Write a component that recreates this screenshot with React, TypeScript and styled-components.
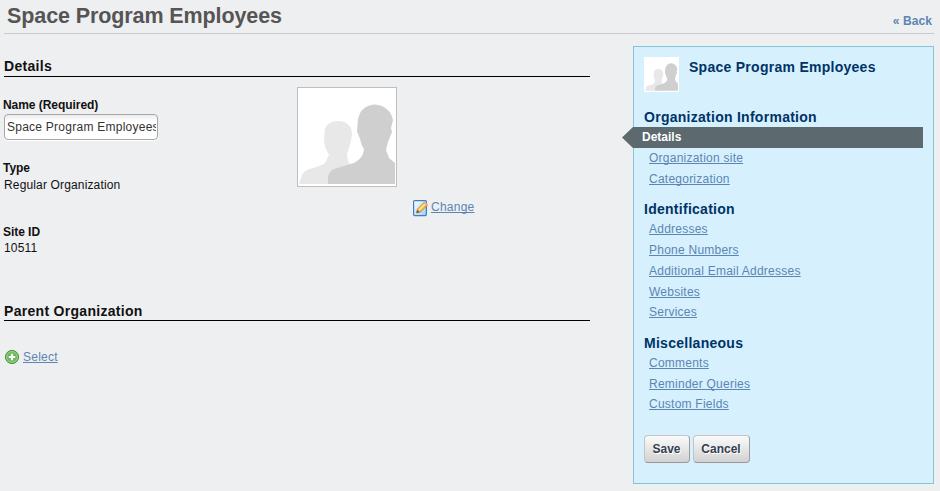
import React from "react";
import styled, { createGlobalStyle } from "styled-components";

const GlobalStyle = createGlobalStyle`
  * { box-sizing: border-box; }
  body {
    margin: 0;
    background: #eeeff1;
    color: #111;
    font: 12px/16px "Liberation Sans", Arial, sans-serif;
  }
`;

const Page = styled.div`
  width: 940px;
  height: 491px;
  padding: 0 6px 0 4px;
  overflow: hidden;
`;

const Header = styled.header`
  display: flex;
  justify-content: space-between;
  height: 34px;
  padding: 0 2px 0 3px;
  border-bottom: 1px solid #c8c9ca;
`;

const Title = styled.h1`
  margin: 0;
  padding-top: 4px;
  color: #555;
  font-size: 21.5px;
  line-height: 25px;
  letter-spacing: -0.1px;
`;

const Back = styled.a`
  margin-top: 13px;
  color: #5b86b2;
  font-weight: bold;
  letter-spacing: 0.1px;
  text-decoration: none;
`;

const Columns = styled.div`
  display: flex;
  justify-content: space-between;
  padding-top: 12px;
`;

const Main = styled.main`
  width: 586px;
  padding-top: 11px;
`;

const SectionTitle = styled.h2<{ $drop?: number }>`
  height: 20px;
  margin: 0;
  padding-top: ${(p) => p.$drop ?? 0}px;
  border-bottom: 1px solid #000;
  color: #111;
  font-size: 14px;
  line-height: 18px;
  letter-spacing: 0.3px;
`;

const DetailsBody = styled.div`
  display: grid;
  grid-template-columns: 293px 1fr;
  height: 224px;
  padding-top: 10px;
`;

const Fields = styled.div`
  padding-top: 10px;
`;

const Field = styled.div<{ $height: number }>`
  height: ${(p) => p.$height}px;
`;

const Label = styled.label`
  display: block;
  height: 17px;
  margin-left: -1px;
  font-weight: bold;
  letter-spacing: -0.05px;
`;

const Value = styled.div<{ $lift?: number }>`
  margin-top: -${(p) => p.$lift ?? 0}px;
  letter-spacing: 0.15px;
`;

const TextInput = styled.input`
  display: block;
  width: 154px;
  height: 26px;
  padding: 0 1px 0 2px;
  border: 1px solid #a5a7aa;
  border-radius: 4px;
  background: linear-gradient(#ececec, #fff 6px);
  box-shadow: 0 1px 0 #fff;
  color: #333;
  font: 12px "Liberation Sans", Arial, sans-serif;
  letter-spacing: 0.25px;
  outline: 0;
`;

const Portrait = styled.div`
  width: 100px;
  height: 100px;
  padding: 1px;
  border: 1px solid #bfbfbf;
  background: #fff;
`;

const Link = styled.a`
  color: #5b86b2;
  letter-spacing: 0.24px;
  line-height: 14px;
  text-decoration: underline 1px;
  text-decoration-skip-ink: none;
  text-underline-offset: 1px;
`;

const Action = styled.div<{ $indent: number; $top: number; $drop?: number }>`
  display: flex;
  gap: 3px;
  margin: ${(p) => p.$top}px 0 0 ${(p) => p.$indent}px;

  ${Link} {
    margin-top: ${(p) => p.$drop ?? 0}px;
  }
`;

const Sidebar = styled.aside`
  width: 301px;
  height: 438px;
  border: 1px solid #84c6d8;
  padding: 10px;
  background: #d7f0fe;
`;

const SideHeader = styled.div`
  display: flex;
  gap: 10px;
  height: 50px;
`;

const Thumb = styled.div`
  width: 35px;
  height: 35px;
  padding: 1px;
  background: #fff;
`;

const SideTitle = styled.h3`
  margin: 0;
  color: #036;
  font-size: 14px;
  line-height: 20px;
  letter-spacing: 0.27px;
`;

const Group = styled.section`
  margin-bottom: 9.85px;
`;

const Item = styled.div`
  display: flex;
  height: 20.75px;
  padding: 3.2px 0 0 5px;
`;

const Current = styled.div`
  display: flex;
  height: 20.75px;
`;

const CurrentBar = styled.div`
  width: 290px;
  height: 21px;
  flex: none;
  padding-left: 9px;
  background: #5c696e;
  color: #fff;
  font-weight: bold;
  line-height: 20px;
`;

const Arrow = styled.svg`
  flex: none;
  width: 11px;
  height: 21px;
  margin-left: -22px;
`;

const Buttons = styled.div`
  display: flex;
  gap: 3px;
  padding-top: 10px;
`;

const Button = styled.button<{ $width: number }>`
  width: ${(p) => p.$width}px;
  height: 28px;
  padding: 0 1px 0 0;
  border: 1px solid #c4c4c4;
  border-right-color: #9c9c9c;
  border-bottom-color: #999;
  border-radius: 4px;
  background: linear-gradient(#fafafa, #d2d2d2);
  color: #34404f;
  font: bold 12px "Liberation Sans", Arial, sans-serif;
  text-shadow: 1px 1px #fff;
`;

const People = styled.svg`
  display: block;
`;

const PeopleIcon = ({ size }: { size: number }) => (
  <People width={size} height={size} viewBox="0 0 96 96">
    <path
      fill="#e8e8e8"
      d="M0 95 3 86Q4 83 8 81L23 76Q27 74 28 70L30 66 26 58 25 51 26 39Q30 32 39 32Q48 32 52 39L53 45 52 52 50 59 48 65 49 72 53 78V95Z"
    />
    <path
      fill="#cfcfcf"
      d="M29 95V88Q30 82 35 80L55 74Q62 70 64 65L65 60Q62 56 61 50L58 42 59 30Q61 20 69 17Q75 14 83 17Q92 21 94 31L92 39 93 43 89 53 87 61 90 69 96 74V95Z"
    />
  </People>
);

const EditIcon = () => (
  <svg width="15" height="17" viewBox="0 0 15 17">
    <defs>
      <linearGradient id="paper" x1="0" y1="0" x2="1" y2="1">
        <stop offset="0" stopColor="#ffffff" />
        <stop offset="1" stopColor="#9bccf8" />
      </linearGradient>
    </defs>
    <rect x=".6" y=".6" width="12.8" height="15" rx="1" fill="url(#paper)" stroke="#427dc4" strokeWidth="1.2" />
    <path d="m3.5 13 1-4 7-7 3 3-7 7Z" fill="#f7bd45" stroke="#b9802e" strokeWidth=".8" />
    <path d="m6 10 6-6" stroke="#ffe9a1" strokeWidth="1.5" />
    <path d="m10.7 3 1.3-1.3 3 3L13.7 6Z" fill="#efac80" />
    <path d="m3.5 13 .8-3 2.2 2Z" fill="#5e5148" />
  </svg>
);

const AddIcon = () => (
  <svg width="16" height="16" viewBox="0 0 16 16">
    <circle cx="8" cy="8" r="6.6" fill="#6cbb5b" stroke="#4b963d" />
    <circle cx="8" cy="8" r="5.4" fill="none" stroke="#a6d89a" strokeWidth=".8" />
    <path d="M8 4.8v6.4M4.8 8h6.4" stroke="#fff" strokeWidth="2.1" />
  </svg>
);

const groups = [
  { title: "Organization Information", current: "Details", links: ["Organization site", "Categorization"] },
  {
    title: "Identification",
    links: ["Addresses", "Phone Numbers", "Additional Email Addresses", "Websites", "Services"],
  },
  { title: "Miscellaneous", links: ["Comments", "Reminder Queries", "Custom Fields"] },
];

export default function App() {
  return (
    <Page>
      <GlobalStyle />
      <Header>
        <Title>Space Program Employees</Title>
        <Back>« Back</Back>
      </Header>
      <Columns>
        <Main>
          <SectionTitle>Details</SectionTitle>
          <DetailsBody>
            <Fields>
              <Field $height={63}>
                <Label htmlFor="name">Name (Required)</Label>
                <TextInput id="name" defaultValue="Space Program Employees" />
              </Field>
              <Field $height={64}>
                <Label>Type</Label>
                <Value>Regular Organization</Value>
              </Field>
              <Field $height={50}>
                <Label>Site ID</Label>
                <Value $lift={1}>10511</Value>
              </Field>
            </Fields>
            <div>
              <Portrait>
                <PeopleIcon size={96} />
              </Portrait>
              <Action $indent={116} $top={13}>
                <EditIcon />
                <Link>Change</Link>
              </Action>
            </div>
          </DetailsBody>
          <SectionTitle $drop={1}>Parent Organization</SectionTitle>
          <Action $indent={0} $top={28} $drop={1}>
            <AddIcon />
            <Link>Select</Link>
          </Action>
        </Main>
        <Sidebar>
          <SideHeader>
            <Thumb>
              <PeopleIcon size={33} />
            </Thumb>
            <SideTitle>Space Program Employees</SideTitle>
          </SideHeader>
          {groups.map((group) => (
            <Group key={group.title}>
              <SideTitle>{group.title}</SideTitle>
              {group.current && (
                <Current>
                  <Arrow viewBox="0 0 11 21">
                    <path d="M11 0V21L0 10.5Z" fill="#5c696e" />
                  </Arrow>
                  <CurrentBar>{group.current}</CurrentBar>
                </Current>
              )}
              {group.links.map((link) => (
                <Item key={link}>
                  <Link>{link}</Link>
                </Item>
              ))}
            </Group>
          ))}
          <Buttons>
            <Button $width={46}>Save</Button>
            <Button $width={57}>Cancel</Button>
          </Buttons>
        </Sidebar>
      </Columns>
    </Page>
  );
}
